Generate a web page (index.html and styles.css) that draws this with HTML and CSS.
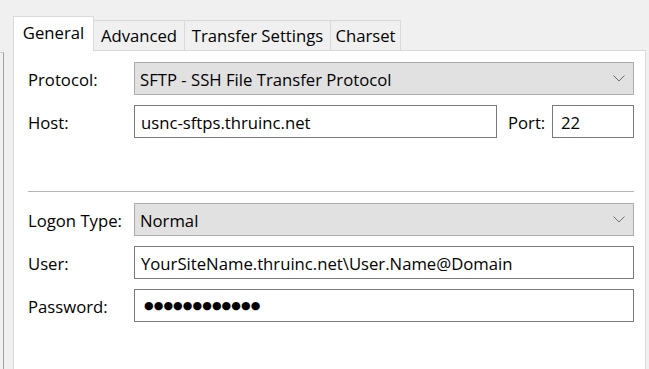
FILE: index.html
```html
<!DOCTYPE html>
<html lang="en">
<head>
  <meta charset="UTF-8">
  <title>Site Manager - General</title>
  <link rel="stylesheet" href="styles.css">
</head>
<body>
  <div class="window">
    <div class="side"></div>

    <div class="tabctl">
      <div class="tabs">
        <div class="tab active">General</div>
        <div class="tab w-adv">Advanced</div>
        <div class="tab w-tr">Transfer Settings</div>
        <div class="tab w-cs">Charset</div>
      </div>

      <div class="panel">
        <div class="form">
          <label class="lbl">Protocol:</label>
          <div class="select">
            <span>SFTP - SSH File Transfer Protocol</span>
            <svg class="chev" width="12" height="7" viewBox="0 0 12 7"><polyline points="0.5,0.5 6,6 11.5,0.5" fill="none" stroke="#6d6d6d" stroke-width="1"/></svg>
          </div>

          <label class="lbl">Host:</label>
          <div class="hostrow">
            <div class="input host">usnc-sftps.thruinc.net</div>
            <label class="lbl port-lbl">Port:</label>
            <div class="input port">22</div>
          </div>
        </div>

        <div class="sep"></div>

        <div class="form">
          <label class="lbl">Logon Type:</label>
          <div class="select">
            <span>Normal</span>
            <svg class="chev" width="12" height="7" viewBox="0 0 12 7"><polyline points="0.5,0.5 6,6 11.5,0.5" fill="none" stroke="#6d6d6d" stroke-width="1"/></svg>
          </div>

          <label class="lbl">User:</label>
          <div class="input">YourSiteName.thruinc.net\User.Name@Domain</div>

          <label class="lbl">Password:</label>
          <div class="input dots">●●●●●●●●●●●●</div>
        </div>
      </div>
    </div>
  </div>
</body>
</html>
```

FILE: styles.css
```css
body {
  margin: 0;
  background-color: #f0f0f0;
  font-family: "Open Sans", "Noto Sans", sans-serif;
  font-size: 16.7px;
  color: #000;
}
.window {
  display: flex;
  height: 369px;
  overflow: hidden;
}
.side {
  width: 3px;
  margin-top: 52px;
  border-top: 1px solid #c9c9c9;
  border-right: 1px solid #a0a0a0;
}
.tabctl {
  margin-left: 9px;
  padding-top: 16px;
  width: 633px;
}
.tabs {
  display: flex;
  align-items: flex-end;
  height: 34px;
}
.tab {
  box-sizing: border-box;
  height: 30px;
  display: flex;
  align-items: center;
  justify-content: center;
  border: 1px solid #d9d9d9;
  border-bottom: none;
  margin-left: -1px;
  background: #f0f0f0;
  white-space: nowrap;
}
.tab.active {
  position: relative;
  z-index: 1;
  margin-left: 0;
  width: 81px;
  height: 35px;
  margin-bottom: -1px;
  padding-bottom: 3px;
  background: white;
}
.w-adv { width: 92px; }
.w-tr { width: 147px; }
.w-cs { width: 71px; }
.panel {
  box-sizing: border-box;
  height: 330px;
  background: white;
  border: 1px solid #d9d9d9;
  padding: 11px 11px 0 14px;
}
.form {
  display: grid;
  grid-template-columns: 106px 1fr;
  row-gap: 10px;
  align-items: center;
}
.lbl {
  white-space: nowrap;
  padding-top: 2px;
}
.select {
  box-sizing: border-box;
  height: 33px;
  display: flex;
  align-items: center;
  justify-content: space-between;
  padding: 2px 8px 0 5px;
  background: #e1e1e1;
  border: 1px solid #adadad;
}
.input {
  box-sizing: border-box;
  height: 33px;
  display: flex;
  align-items: center;
  padding: 2px 6px 0;
  background: white;
  border: 1px solid #7a7a7a;
  white-space: nowrap;
}
.hostrow {
  display: flex;
  align-items: center;
  padding-top: 0;
}
.host {
  flex: 1;
}
.port-lbl {
  width: 44px;
  margin-left: 11px;
}
.port {
  width: 82px;
  padding-left: 8px;
}
.sep {
  height: 1px;
  background: #b4b4b4;
  margin: 53px 0 11px;
}
.dots {
  padding: 0 0 0 9px;
  font-family: "DejaVu Sans", sans-serif;
  font-size: 11px;
  letter-spacing: 0.1px;
}
.chev {
  margin-top: -2px;
}
```
